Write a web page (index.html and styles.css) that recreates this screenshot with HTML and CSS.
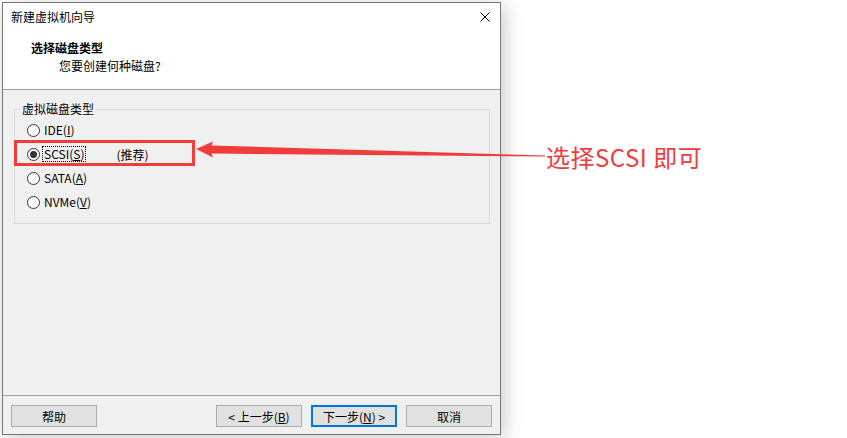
FILE: index.html
```html
<!DOCTYPE html>
<html lang="zh-CN">
<head>
<meta charset="utf-8">
<title>新建虚拟机向导</title>
<link rel="stylesheet" href="styles.css">
</head>
<body>
<div class="window">
  <div class="header">
    <div class="titlebar">
      <span class="title">新建虚拟机向导</span>
      <svg class="close" width="10" height="10" viewBox="0 0 10 10"><path d="M0.5 0.5 L9.5 9.5 M9.5 0.5 L0.5 9.5" stroke="#000" stroke-width="1" fill="none"/></svg>
    </div>
    <div class="heading">选择磁盘类型</div>
    <div class="subheading">您要创建何种磁盘?</div>
  </div>
  <div class="content">
    <fieldset class="group">
      <legend class="legend">虚拟磁盘类型</legend>
      <div class="option"><span class="radio"></span><span class="label">IDE(<u>I</u>)</span></div>
      <div class="option"><span class="radio checked"></span><span class="label focus">SCSI(<u>S</u>)</span><span class="note">(推荐)</span></div>
      <div class="option"><span class="radio"></span><span class="label">SATA(<u>A</u>)</span></div>
      <div class="option"><span class="radio"></span><span class="label">NVMe(<u>V</u>)</span></div>
    </fieldset>
  </div>
  <div class="footer">
    <button class="btn">帮助</button>
    <div class="nav">
      <button class="btn">&lt; 上一步(<u>B</u>)</button>
      <button class="btn default">下一步(<u>N</u>) &gt;</button>
      <button class="btn">取消</button>
    </div>
  </div>
</div>

<div class="highlight"></div>
<svg class="arrow" width="847" height="438" viewBox="0 0 847 438">
  <polygon points="196,149 213,141.5 211.5,145.5 545,155.6 545,156.6 211.5,153.5 213,157.5" fill="#f23c3c"/>
</svg>
<div class="callout">选择SCSI 即可</div>
</body>
</html>
```

FILE: styles.css
```css
html, body {
  margin: 0;
  padding: 0;
}
body {
  width: 847px;
  height: 438px;
  background: #ffffff;
  position: relative;
  overflow: hidden;
  font-family: "Noto Sans CJK SC", "Noto Sans", sans-serif;
  font-size: 12px;
  color: #000;
}
.window {
  margin: 2px 0 0 2px;
  width: 499px;
  height: 433px;
  box-sizing: border-box;
  border: 1px solid #777777;
  background: #f0f0f0;
  display: flex;
  flex-direction: column;
  box-shadow: 3px 3px 18px rgba(0, 0, 0, 0.22);
}
.header {
  background: #ffffff;
  border-bottom: 1px solid #a0a0a0;
  padding: 6px 0 15px 0;
}
.titlebar {
  display: flex;
  align-items: center;
  justify-content: space-between;
  height: 16px;
  padding: 0 10px 0 8px;
}
.title {
  line-height: 16px;
}
.close {
  display: block;
}
.heading {
  font-weight: bold;
  line-height: 16px;
  margin-top: 15px;
  padding-left: 28px;
}
.subheading {
  line-height: 16px;
  margin-top: 2px;
  padding-left: 56px;
}
.content {
  flex: 1;
  padding: 0 10px 0 11px;
}
.group {
  margin: 11px 0 0 0;
  padding: 1px 0 9px 12px;
  border: 1px solid #dcdcdc;
  min-width: 0;
}
.legend {
  padding: 0 2px;
  margin-left: -7px;
  line-height: 16px;
}
.option {
  display: flex;
  align-items: center;
  height: 24px;
}
.radio {
  width: 13px;
  height: 13px;
  box-sizing: border-box;
  border: 1px solid #333333;
  border-radius: 50%;
  background: #ffffff;
  display: flex;
  align-items: center;
  justify-content: center;
  margin-right: 3px;
}
.radio.checked::after {
  content: "";
  width: 7px;
  height: 7px;
  border-radius: 50%;
  background: #333333;
}
.label {
  padding: 0 1px;
  line-height: 14px;
}
.label.focus {
  outline: 1px dotted #000;
}
.note {
  margin-left: 31px;
}
.footer {
  border-top: 1px solid #a0a0a0;
  padding: 9px 8px 7px 8px;
  display: flex;
  justify-content: space-between;
  align-items: flex-start;
}
.nav {
  display: flex;
  gap: 9px;
}
.btn {
  width: 86px;
  height: 22px;
  box-sizing: border-box;
  border: 1px solid #adadad;
  background: #e1e1e1;
  font-family: "Noto Sans CJK SC", "Noto Sans", sans-serif;
  font-size: 12px;
  color: #000;
  padding: 0;
  margin: 0;
}
.btn.default {
  border: 2px solid #0078d7;
}
.highlight {
  position: absolute;
  left: 14px;
  top: 140px;
  width: 181px;
  height: 26px;
  box-sizing: border-box;
  border: 3px solid #f23c3c;
}
.arrow {
  position: absolute;
  left: 0;
  top: 0;
}
.callout {
  position: absolute;
  left: 546px;
  top: 143px;
  font-size: 24px;
  line-height: 28px;
  letter-spacing: 0.5px;
  color: #f23c3c;
  white-space: nowrap;
}
```
